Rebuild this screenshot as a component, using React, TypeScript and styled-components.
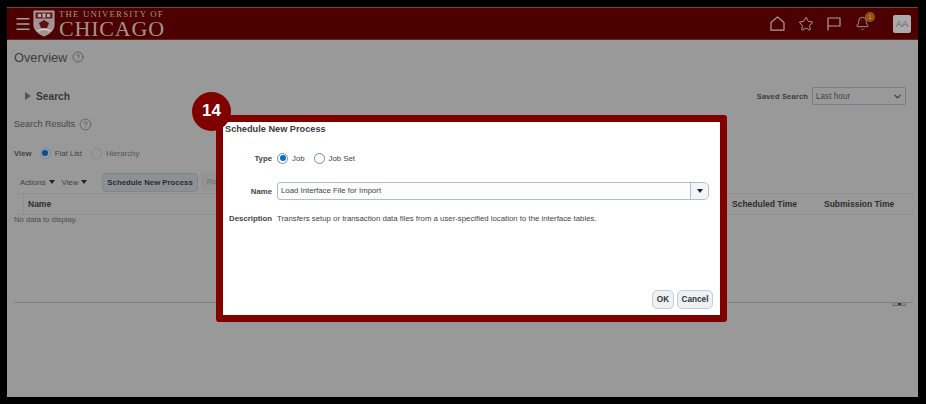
import styled, { createGlobalStyle } from 'styled-components';
import { Star, Bell, Menu, ChevronDown, CircleHelp } from 'lucide-react';

const GlobalStyle = createGlobalStyle`
  html, body {
    margin: 0;
    padding: 0;
    background: #000;
    font-family: "Liberation Sans", Arial, sans-serif;
  }
`;

const Frame = styled.div`
  position: relative;
  width: 926px;
  height: 404px;
  box-sizing: border-box;
  padding: 7px 8px 7px 7px;
  background: #000;
  overflow: hidden;
`;

const Page = styled.div`
  height: 100%;
  background: #999;
  color: #333;
  display: flex;
  flex-direction: column;
`;

const Header = styled.header`
  height: 33px;
  flex: none;
  box-sizing: border-box;
  background: #4d0000;
  border-top: 1px solid #7a4a10;
  border-bottom: 1px solid #6b2020;
  display: flex;
  align-items: center;
  padding: 0 7px 0 7px;
  color: #a8a0a0;
`;

const Crest = styled.svg`
  margin-left: 1px;
  flex: none;
`;

const Wordmark = styled.div`
  margin-left: 4px;
  font-family: "Liberation Serif", "Times New Roman", serif;
  color: #a39292;
  display: flex;
  flex-direction: column;
  height: 30px;
`;

const WordTop = styled.span`
  font-size: 8.8px;
  line-height: 11px;
  letter-spacing: 1.16px;
  white-space: nowrap;
`;

const WordMain = styled.span`
  font-size: 22px;
  line-height: 17px;
  letter-spacing: 0.8px;
  white-space: nowrap;
`;

const HeaderIcons = styled.div`
  margin-left: auto;
  display: flex;
  align-items: center;
  color: #a8a0a0;
`;

const IconSlot = styled.span<{ $gap: number }>`
  display: flex;
  position: relative;
  margin-right: ${p => p.$gap}px;
`;

const Badge = styled.span`
  position: absolute;
  top: -4px;
  right: -5px;
  width: 10px;
  height: 10px;
  border-radius: 50%;
  background: #94500f;
  color: #c0aa90;
  font-size: 6px;
  line-height: 10px;
  text-align: center;
`;

const Avatar = styled.div`
  width: 18px;
  height: 18px;
  border-radius: 2px;
  background: #ababab;
  color: #666;
  font-size: 9.5px;
  line-height: 18px;
  text-align: center;
`;

const Content = styled.main`
  flex: 1;
  min-height: 0;
  display: flex;
  flex-direction: column;
`;

const TitleRow = styled.div`
  display: flex;
  align-items: center;
  gap: 5px;
  height: 34px;
  padding-left: 7px;
  font-size: 12.8px;
  color: #3d3d3d;
`;

const SearchRow = styled.div`
  display: flex;
  align-items: center;
  height: 26px;
  margin-top: 9px;
  padding: 0 12px 0 18px;
`;

const Triangle = styled.span`
  width: 0;
  height: 0;
  border-left: 6px solid #555;
  border-top: 4.5px solid transparent;
  border-bottom: 4.5px solid transparent;
  margin-right: 5px;
`;

const SearchLabel = styled.span`
  font-size: 10.2px;
  font-weight: 700;
  color: #3a3a3a;
`;

const SavedSearch = styled.div`
  margin-left: auto;
  display: flex;
  align-items: center;
  gap: 4px;
  font-size: 7.6px;
  font-weight: 700;
  letter-spacing: 0.12px;
  color: #3d3d3d;
`;

const SavedSelect = styled.div`
  width: 94px;
  height: 18px;
  box-sizing: border-box;
  border: 1px solid #777f85;
  border-radius: 1px;
  display: flex;
  align-items: center;
  justify-content: space-between;
  padding: 0 2px 0 3px;
  font-size: 8.2px;
  font-weight: 400;
  letter-spacing: 0;
  color: #444;
`;

const ResultsRow = styled.div`
  display: flex;
  align-items: center;
  gap: 4px;
  height: 20px;
  margin-top: 5px;
  padding-left: 7px;
  font-size: 9px;
  color: #454545;
`;

const ViewRow = styled.div`
  display: flex;
  align-items: center;
  height: 16px;
  margin-top: 11px;
  padding-left: 7px;
  font-size: 7.8px;
  color: #444;
`;

const ViewLabel = styled.span`
  font-weight: 700;
  margin-right: 8px;
`;

const RadioDot = styled.span<{ $dot?: string }>`
  width: 11px;
  height: 11px;
  box-sizing: border-box;
  flex: none;
  border-radius: 50%;
  border: 1px solid ${p => (p.$dot ? '#6f8fa8' : '#80888f')};
  display: inline-flex;
  align-items: center;
  justify-content: center;
  &::after {
    content: '';
    display: ${p => (p.$dot ? 'block' : 'none')};
    width: 6px;
    height: 6px;
    border-radius: 50%;
    background: ${p => p.$dot};
  }
`;

const RadioText = styled.span<{ $muted?: boolean }>`
  margin: 0 9px 0 4px;
  color: ${p => (p.$muted ? '#555' : '#444')};
`;

const Toolbar = styled.div`
  display: flex;
  align-items: center;
  height: 20px;
  margin-top: 11px;
  padding-left: 13px;
  font-size: 7.8px;
  color: #3f3f3f;
`;

const MenuItem = styled.span`
  display: flex;
  align-items: center;
  gap: 3px;
  margin-right: 7px;
`;

const Caret = styled.span`
  width: 0;
  height: 0;
  border-top: 4px solid #222;
  border-left: 3.5px solid transparent;
  border-right: 3.5px solid transparent;
`;

const ToolbarButton = styled.span`
  margin-left: 8px;
  height: 19px;
  padding: 0 4px;
  box-sizing: border-box;
  border: 1px solid #7f878c;
  border-radius: 4px;
  background: #8d9195;
  font-size: 7.8px;
  font-weight: 700;
  line-height: 17px;
  color: #2c2c2c;
`;

const Muted = styled.span`
  margin-left: 3px;
  padding: 0 6px;
  height: 18px;
  line-height: 18px;
  background: #949494;
  color: #6e6e6e;
`;

const TableHead = styled.div`
  height: 22px;
  box-sizing: border-box;
  margin: 1px 5px 0 7px;
  border-top: 1px solid #909090;
  border-bottom: 1px solid #909090;
  display: grid;
  grid-template-columns: 718px 92px 1fr;
  align-items: center;
  font-size: 8.5px;
  font-weight: 700;
  color: #2e2e2e;
`;

const NameCell = styled.span`
  margin-left: 9px;
  padding-left: 4px;
  border-left: 1px solid #909090;
  line-height: 20px;
`;

const EmptyText = styled.div`
  padding-left: 7px;
  font-size: 7.7px;
  line-height: 10px;
  color: #4c4c4c;
`;

const Splitter = styled.div`
  margin: 77px 5px 0 7px;
  height: 1px;
  background: #7f7f7f;
  position: relative;
`;

const SplitterHandle = styled.span`
  position: absolute;
  right: 7px;
  top: 1px;
  width: 14px;
  height: 3px;
  background: #8a8a8a;
  border: 1px solid #6f6f6f;
  border-top: 0;
  box-sizing: border-box;
  &::after {
    content: '';
    position: absolute;
    left: 5px;
    top: 0;
    width: 3px;
    height: 2px;
    background: #333;
  }
`;

const Dialog = styled.section`
  position: absolute;
  left: 216px;
  top: 115px;
  width: 511px;
  height: 207px;
  box-sizing: border-box;
  border: 7px solid #800000;
  border-radius: 3px;
  background: #fff;
  color: #333;
  display: flex;
  flex-direction: column;
  padding: 0 7px 6px 2px;
`;

const StepBadge = styled.div`
  position: absolute;
  left: 192px;
  top: 92px;
  width: 39px;
  height: 39px;
  border-radius: 50%;
  background: #800000;
  color: #fff;
  font-size: 17px;
  font-weight: 700;
  line-height: 37px;
  text-align: center;
`;

const DialogTitle = styled.h2`
  margin: 1px 0 0;
  font-size: 9.2px;
  line-height: 13px;
  font-weight: 700;
  color: #3a3a3a;
`;

const FormGrid = styled.div`
  margin-top: 15px;
  display: grid;
  grid-template-columns: 47px 1fr;
  column-gap: 5px;
  grid-template-rows: 14px 18px 12px;
  row-gap: 17px;
  align-items: center;
`;

const FieldLabel = styled.label<{ $pull?: boolean }>`
  text-align: right;
  font-size: 7.8px;
  font-weight: 700;
  color: #444;
  white-space: nowrap;
  margin-top: ${p => (p.$pull ? '-10px' : '0')};
`;

const RadioGroup = styled.div`
  display: flex;
  align-items: center;
  font-size: 7.8px;
  color: #444;
`;

const Combo = styled.div`
  height: 18px;
  margin-right: 4px;
  box-sizing: border-box;
  border: 1px solid #aebdc8;
  border-radius: 3px 5px 5px 3px;
  display: flex;
  align-items: center;
  font-size: 7.8px;
  color: #444;
  background: #fbfcfd;
`;

const ComboText = styled.span`
  flex: 1;
  padding: 0 0 1px 3px;
`;

const ComboButton = styled.span`
  width: 17px;
  height: 100%;
  border-left: 1px solid #aebdc8;
  display: flex;
  align-items: center;
  justify-content: center;
  background: #f3f5f7;
  border-radius: 0 5px 5px 0;
`;

const Description = styled.span`
  font-size: 7.8px;
  color: #444;
  white-space: nowrap;
  margin-top: -10px;
`;

const DialogActions = styled.div`
  margin-top: auto;
  display: flex;
  justify-content: flex-end;
  gap: 3px;
`;

const ActionButton = styled.button<{ $w: number }>`
  width: ${p => p.$w}px;
  height: 19px;
  padding: 0;
  border: 1px solid #c3ced6;
  border-radius: 5px;
  background: #eef1f3;
  font-family: inherit;
  font-size: 8.2px;
  font-weight: 700;
  color: #333;
`;

const App = (): JSX.Element => {
  return (
    <>
      <GlobalStyle />
      <Frame>
        <Page>
          <Header>
            <Menu size={18} strokeWidth={1.7} />
            <Crest width="22" height="27" viewBox="0 0 22 27">
              <path d="M1 1 H21 V15 C21 21 15 24.5 11 26 C7 24.5 1 21 1 15 Z" fill="#a39292" stroke="#b5a8a8" strokeWidth="1" />
              <path d="M2.5 2.5 H19.5 V8.5 H2.5 Z" fill="#6b2222" />
              <path d="M5 4 h3 v3 h-3 z M14 4 h3 v3 h-3 z M9.5 3.5 h3 v4 h-3 z" fill="#bdaeae" />
              <path d="M11 10 L16 13 L14 18 H8 L6 13 Z" fill="#5a1414" />
              <path d="M4.5 21 Q11 17.5 17.5 21" fill="none" stroke="#d6caca" strokeWidth="1.5" />
            </Crest>
            <Wordmark>
              <WordTop>THE UNIVERSITY OF</WordTop>
              <WordMain>CHICAGO</WordMain>
            </Wordmark>
            <HeaderIcons>
              <IconSlot $gap={13}>
                <svg width="15" height="15" viewBox="0 0 15 15" fill="none" stroke="currentColor" strokeWidth="1.2">
                  <path d="M1 6.5 L7.5 0.9 L14 6.5 V14.2 H1 Z" strokeLinejoin="round" />
                </svg>
              </IconSlot>
              <IconSlot $gap={13}><Star size={16} strokeWidth={1.5} /></IconSlot>
              <IconSlot $gap={14}>
                <svg width="14" height="14" viewBox="0 0 14 14" fill="none" stroke="currentColor" strokeWidth="1.2">
                  <path d="M1 13.5 V1 H13 V9 H1" strokeLinejoin="round" />
                </svg>
              </IconSlot>
              <IconSlot $gap={23}>
                <Bell size={15} strokeWidth={1.4} />
                <Badge>1</Badge>
              </IconSlot>
              <Avatar>AA</Avatar>
            </HeaderIcons>
          </Header>
          <Content>
            <TitleRow>
              Overview
              <CircleHelp size={12} strokeWidth={1.2} />
            </TitleRow>
            <SearchRow>
              <Triangle />
              <SearchLabel>Search</SearchLabel>
              <SavedSearch>
                Saved Search
                <SavedSelect>
                  Last hour
                  <ChevronDown size={11} strokeWidth={2.2} color="#333" />
                </SavedSelect>
              </SavedSearch>
            </SearchRow>
            <ResultsRow>
              Search Results
              <CircleHelp size={13} strokeWidth={1.1} />
            </ResultsRow>
            <ViewRow>
              <ViewLabel>View</ViewLabel>
              <RadioDot $dot="#0a4f90" />
              <RadioText>Flat List</RadioText>
              <RadioDot />
              <RadioText $muted>Hierarchy</RadioText>
            </ViewRow>
            <Toolbar>
              <MenuItem>Actions <Caret /></MenuItem>
              <MenuItem>View <Caret /></MenuItem>
              <ToolbarButton>Schedule New Process</ToolbarButton>
              <Muted>Re</Muted>
            </Toolbar>
            <TableHead>
              <NameCell>Name</NameCell>
              <span>Scheduled Time</span>
              <span>Submission Time</span>
            </TableHead>
            <EmptyText>No data to display.</EmptyText>
            <Splitter>
              <SplitterHandle />
            </Splitter>
          </Content>
        </Page>
        <Dialog>
          <DialogTitle>Schedule New Process</DialogTitle>
          <FormGrid>
            <FieldLabel>Type</FieldLabel>
            <RadioGroup>
              <RadioDot $dot="#0a6fc4" />
              <RadioText>Job</RadioText>
              <RadioDot />
              <RadioText>Job Set</RadioText>
            </RadioGroup>
            <FieldLabel>Name</FieldLabel>
            <Combo>
              <ComboText>Load Interface File for Import</ComboText>
              <ComboButton><Caret /></ComboButton>
            </Combo>
            <FieldLabel $pull>Description</FieldLabel>
            <Description>Transfers setup or transaction data files from a user-specified location to the interface tables.</Description>
          </FormGrid>
          <DialogActions>
            <ActionButton $w={22}>OK</ActionButton>
            <ActionButton $w={36}>Cancel</ActionButton>
          </DialogActions>
        </Dialog>
        <StepBadge>14</StepBadge>
      </Frame>
    </>
  );
};

export default App;
